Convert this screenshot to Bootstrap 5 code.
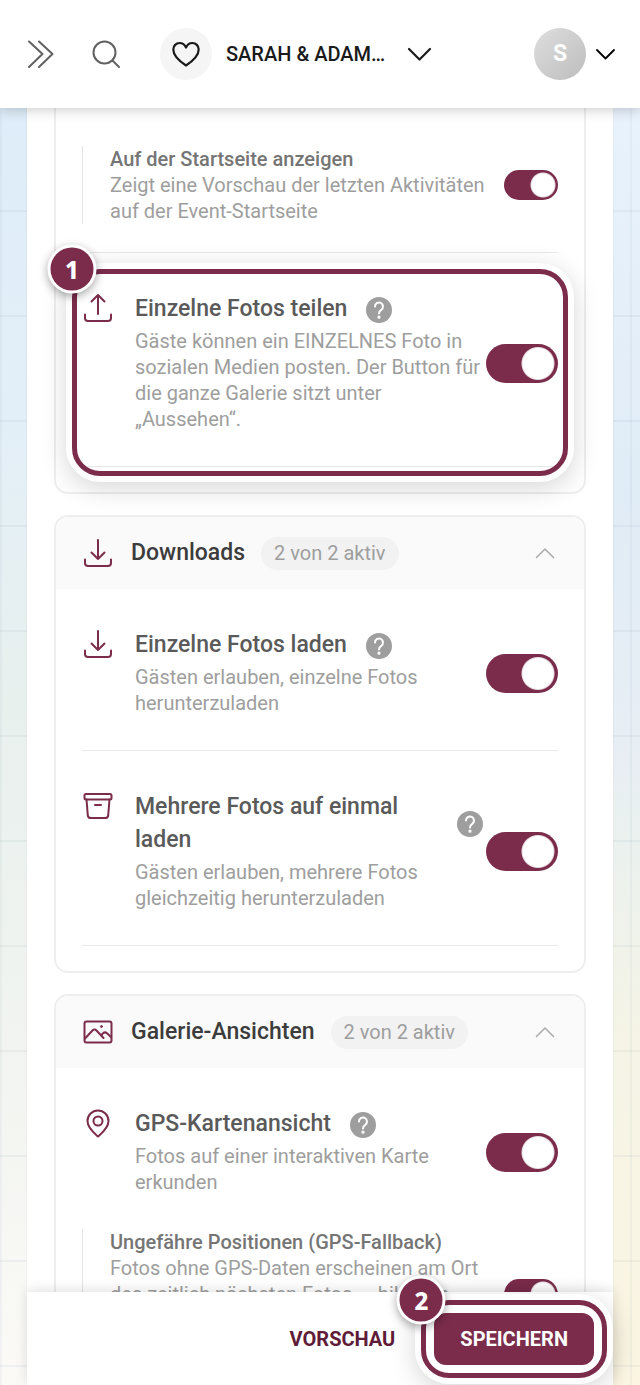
<!DOCTYPE html>
<html lang="de">
<head>
<meta charset="utf-8">
<meta name="viewport" content="width=device-width, initial-scale=1">
<title>Event-Einstellungen</title>
<link href="https://cdn.jsdelivr.net/npm/bootstrap@5.3.0/dist/css/bootstrap.min.css" rel="stylesheet">
<style>
  :root { --wine: #7b2c4b; --line: #eeeeee; }
  body {
    font-family: Roboto, "Liberation Sans", sans-serif;
    font-size: 20px; line-height: 26px; color: #9e9e9e;
    background:
      linear-gradient(rgba(90,120,140,.07) 2px, transparent 2px) 0 0 / 105px 105px,
      linear-gradient(90deg, rgba(90,120,140,.06) 2px, transparent 2px) 0 0 / 105px 105px,
      linear-gradient(#dcecf9, #e3eff8 30%, #e8f0ee 50%, #f1f4f0 75%, #fbfaf7) left / 50% 100% no-repeat,
      linear-gradient(#ebf4fe, #e0ecf6 35%, #e8eef4 55%, #eaf1ef 60%, #f5f4e6 75%, #fbf5e2) right / 50% 100% no-repeat;
  }
  svg { display: block; flex: none; fill: none; stroke: currentColor; stroke-linecap: round; stroke-linejoin: round; }
  .topbar { height: 108px; padding: 0 24px; z-index: 20; box-shadow: 0 2px 12px rgba(0,0,0,.2); color: #1a1a1a; }
  .icon-btn { padding: 0; border: 0; background: none; color: #616161; }
  .event-btn { font-size: 20px; font-weight: 500; gap: 14px; margin-left: 40px; color: #1a1a1a; }
  .disc { width: 52px; height: 52px; border-radius: 50%; background: #f5f5f5; }
  .avatar { background: linear-gradient(135deg, #dedede, #bdbdbd); color: #fff; font-size: 23px; font-weight: 700; }
  .panel { margin: 0 27px; padding: 0 27px; z-index: 0; box-shadow: 0 0 2px rgba(0,0,0,.08); }
  .box { border: 2px solid var(--line); border-radius: 14px; margin-bottom: 21px; }
  .box-first { border-top: 0; border-radius: 0 0 14px 14px; padding-top: 38px; }
  .box-head { height: 72px; padding: 0 26px; background: #fafafa; border-radius: 12px 12px 0 0; color: #3c3c3c; }
  .box-head h2 { font-size: 23px; line-height: 33px; font-weight: 500; margin: 0 16px 2px 17px; }
  .count { padding: 3px 13px 4px; border-radius: 17px; background: #f2f2f2; color: #9e9e9e; }
  .box-body { padding: 0 26px 25px; }
  .setting { margin-top: 26px; padding: 13px 0 34px; border-bottom: 1px solid #e9e9e9; }
  .setting.open { border-bottom: 0; }
  .setting-text { margin: 0 3px 0 21px; min-width: 0; }
  .setting-title { gap: 19px; margin-bottom: 3px; }
  .setting-title label { font-size: 23px; line-height: 33px; font-weight: 500; color: #5a5a5a; }
  .wine { color: var(--wine); }
  .help { width: 26px; height: 26px; border-radius: 50%; background: #9e9e9e; color: #fff; margin-top: 2px; }
  .sub { border-left: 1px solid #e4e4e4; padding-left: 27px; gap: 16px; }
  .sub label { font-weight: 500; color: #757575; }
  .rule { height: 1px; margin: 28px 0 0; background: #e9e9e9; }
  .form-check-input.toggle[type=checkbox] {
    width: 72px; height: 39px; margin: 2px 0 0; border: 0; border-radius: 20px;
    background: radial-gradient(circle at calc(100% - 20px) 50%, #fff 15px, #e4d9de 16px, var(--wine) 17px) center / 100% 100%;
  }
  .form-check-input.toggle-sm[type=checkbox] {
    width: 54px; height: 30px; margin: 0;
    background-image: radial-gradient(circle at calc(100% - 15px) 50%, #fff 11px, #e4d9de 12px, var(--wine) 13px);
  }
  .marker { position: absolute; pointer-events: none; border: 5px solid var(--wine); border-radius: 28px;
    box-shadow: 0 0 0 6px rgba(255,255,255,.92), 0 6px 26px 6px rgba(0,0,0,.16); }
  .marker-item { inset: -10px; }
  .marker-btn { inset: -13px; }
  .step { position: absolute; top: -5px; left: -5px; width: 49px; height: 49px; border: 3px solid #fff; border-radius: 50%;
    background: var(--wine); color: #fff; font: 800 24px/43px "Noto Sans", sans-serif; text-align: center;
    box-shadow: 0 3px 10px rgba(0,0,0,.35); transform: translate(-50%, -50%); }
  .actions { margin: 0 27px; height: 93px; padding: 0 19px; gap: 39px; z-index: 20; box-shadow: 0 -2px 12px rgba(0,0,0,.12); }
  .actions .btn { font-size: 20px; line-height: 26px; font-weight: 700; border: 0; }
  .btn-preview { padding: 13px 0; color: #5f1c38; }
  .btn-store, .btn-store:hover { padding: 13px 26px; border-radius: 12px; background: var(--wine); color: #fff; }
</style>
</head>
<body class="vh-100 d-flex flex-column overflow-hidden">

<svg width="0" height="0" class="position-absolute" aria-hidden="true">
  <symbol id="i-download" viewBox="0 0 32 32"><path d="M16 3v19M9.500 15.500l6.500 6.500 6.500-6.500M3 22.500v3.500a3 3 0 0 0 3 3h20a3 3 0 0 0 3-3v-3.500"/></symbol>
  <symbol id="i-upload" viewBox="0 0 32 32"><path d="M16 22V3M9.500 9.500 16 3l6.500 6.500M3 22.500v3.500a3 3 0 0 0 3 3h20a3 3 0 0 0 3-3v-3.500"/></symbol>
  <symbol id="i-archive" viewBox="0 0 32 32"><rect x="2.500" y="4" width="27" height="5.500" rx="1.500"/><path d="M4.500 9.500l1.300 15.800a3 3 0 0 0 3 2.700h14.400a3 3 0 0 0 3-2.700L27.500 9.500M13 15h6"/></symbol>
  <symbol id="i-image" viewBox="0 0 32 32"><rect x="2.500" y="5.500" width="27" height="21" rx="2"/><path d="M3 22.500l7.500-8q2-2 4 0l7 7.500M19 19.500l2-2.200q2-1.800 4 0L29 21"/><circle cx="19.500" cy="10.500" r="1" fill="currentColor" stroke-width="1"/></symbol>
  <symbol id="i-pin" viewBox="0 0 32 32"><path d="M16 29.500c-4-3.500-10.500-8.500-10.500-15.500a10.500 10.500 0 0 1 21 0c0 7-6.500 12-10.500 15.500z"/><circle cx="16" cy="14" r="4.500"/></symbol>
  <symbol id="i-help" viewBox="0 0 26 26"><path d="M9 9.600a4 4 0 1 1 6.300 3.200c-1.500 1-2.300 1.700-2.300 3.600"/><circle cx="13" cy="20.200" r=".6" fill="currentColor"/></symbol>
  <symbol id="i-up" viewBox="0 0 26 26"><path d="M4.500 17.500 13 9l8.500 8.500"/></symbol>
</svg>

<header class="topbar bg-white d-flex align-items-center position-relative flex-shrink-0">
  <button class="icon-btn" aria-label="Menü öffnen"><svg width="32" height="32" viewBox="0 0 32 32" stroke-width="2"><path d="M5 3.500 18.500 16 5 29M15 3.500 28.500 16 15 29"/></svg></button>
  <button class="icon-btn ms-4 ps-2" aria-label="Suchen"><svg width="32" height="32" viewBox="0 0 32 32" stroke-width="2"><circle cx="16.500" cy="14.500" r="11"/><path d="M24.500 22.500 31 29"/></svg></button>
  <button class="icon-btn event-btn d-flex align-items-center">
    <span class="disc d-flex align-items-center justify-content-center"><svg width="30" height="30" viewBox="0 0 30 30" stroke-width="2.200"><path d="M15 26.500C9 22.500 2.300 17.500 2.300 10.500c0-3.700 2.800-6.500 6.200-6.500 3 0 5.300 1.600 6.500 4.500C16.200 5.600 18.500 4 21.500 4c3.400 0 6.200 2.800 6.200 6.500 0 7-6.700 12-12.700 16z"/></svg></span>
    <span>SARAH &amp; ADAM…</span>
    <svg class="ms-2" width="26" height="26" viewBox="0 0 26 26" stroke-width="2.200"><path d="M2 8 12.500 18.500 23 8"/></svg>
  </button>
  <button class="icon-btn ms-auto d-flex align-items-center gap-2 text-black" aria-label="Konto">
    <span class="disc avatar d-flex align-items-center justify-content-center">S</span>
    <svg width="22" height="22" viewBox="0 0 22 22" stroke-width="1.800"><path d="M3 7l8.500 8.500L20 7"/></svg>
  </button>
</header>

<main class="flex-fill overflow-hidden" style="min-height:0">
  <div class="panel bg-white position-relative">

    <section class="box box-first">
      <div class="box-body">
        <div class="sub d-flex align-items-center">
          <div class="flex-fill"><label class="d-block" for="t-home">Auf der Startseite anzeigen</label>Zeigt eine Vorschau der letzten Aktivitäten auf der Event-Startseite</div>
          <input class="form-check-input toggle toggle-sm flex-shrink-0" type="checkbox" role="switch" id="t-home" checked>
        </div>
        <div class="rule"></div>
        <div class="setting d-flex position-relative">
          <svg class="wine" width="32" height="32" stroke-width="2"><use href="#i-upload"/></svg>
          <div class="setting-text flex-fill">
            <div class="setting-title d-flex align-items-center"><label for="t-share">Einzelne Fotos teilen</label><button class="icon-btn help flex-shrink-0" aria-label="Hilfe"><svg width="26" height="26" stroke-width="2"><use href="#i-help"/></svg></button></div>
            Gäste können ein EINZELNES Foto in sozialen Medien posten. Der Button für die ganze Galerie sitzt unter „Aussehen“.
          </div>
          <input class="form-check-input toggle flex-shrink-0 align-self-center" type="checkbox" role="switch" id="t-share" checked>
          <div class="marker marker-item"><span class="step">1</span></div>
        </div>
      </div>
    </section>

    <section class="box">
      <div class="box-head d-flex align-items-center">
        <svg class="wine" width="32" height="32" stroke-width="2"><use href="#i-download"/></svg>
        <h2>Downloads</h2><span class="count">2 von 2 aktiv</span>
        <button class="icon-btn ms-auto" style="color:#aaa" aria-label="Downloads einklappen"><svg width="26" height="26" stroke-width="1.500"><use href="#i-up"/></svg></button>
      </div>
      <div class="box-body d-flex flex-column">
        <div class="setting d-flex">
          <svg class="wine" width="32" height="32" stroke-width="2"><use href="#i-download"/></svg>
          <div class="setting-text flex-fill">
            <div class="setting-title d-flex align-items-center"><label for="t-one">Einzelne Fotos laden</label><button class="icon-btn help flex-shrink-0" aria-label="Hilfe"><svg width="26" height="26" stroke-width="2"><use href="#i-help"/></svg></button></div>
            Gästen erlauben, einzelne Fotos herunterzuladen
          </div>
          <input class="form-check-input toggle flex-shrink-0 align-self-center" type="checkbox" role="switch" id="t-one" checked>
        </div>
        <div class="setting d-flex">
          <svg class="wine" width="32" height="32" stroke-width="2"><use href="#i-archive"/></svg>
          <div class="setting-text flex-fill">
            <div class="setting-title d-flex align-items-center"><label for="t-many">Mehrere Fotos auf einmal laden</label><button class="icon-btn help flex-shrink-0" aria-label="Hilfe"><svg width="26" height="26" stroke-width="2"><use href="#i-help"/></svg></button></div>
            Gästen erlauben, mehrere Fotos gleichzeitig herunterzuladen
          </div>
          <input class="form-check-input toggle flex-shrink-0 align-self-center" type="checkbox" role="switch" id="t-many" checked>
        </div>
      </div>
    </section>

    <section class="box">
      <div class="box-head d-flex align-items-center">
        <svg class="wine" width="32" height="32" stroke-width="2"><use href="#i-image"/></svg>
        <h2>Galerie-Ansichten</h2><span class="count">2 von 2 aktiv</span>
        <button class="icon-btn ms-auto" style="color:#aaa" aria-label="Galerie-Ansichten einklappen"><svg width="26" height="26" stroke-width="1.500"><use href="#i-up"/></svg></button>
      </div>
      <div class="box-body d-flex flex-column">
        <div class="setting open d-flex">
          <svg class="wine" width="32" height="32" stroke-width="2"><use href="#i-pin"/></svg>
          <div class="setting-text flex-fill">
            <div class="setting-title d-flex align-items-center"><label for="t-gps">GPS-Kartenansicht</label><button class="icon-btn help flex-shrink-0" aria-label="Hilfe"><svg width="26" height="26" stroke-width="2"><use href="#i-help"/></svg></button></div>
            Fotos auf einer interaktiven Karte erkunden
          </div>
          <input class="form-check-input toggle flex-shrink-0 align-self-center" type="checkbox" role="switch" id="t-gps" checked>
        </div>
        <div class="sub d-flex align-items-center">
          <div class="flex-fill"><label class="d-block" for="t-pos">Ungefähre Positionen (GPS-Fallback)</label>Fotos ohne GPS-Daten erscheinen am Ort des zeitlich nächsten Fotos — hilfreich, wenn die Kamera keine Standortdaten gespeichert hat und Bilder fehlen</div>
          <input class="form-check-input toggle toggle-sm flex-shrink-0" type="checkbox" role="switch" id="t-pos" checked>
        </div>
      </div>
    </section>
  </div>
</main>

<footer class="actions bg-white d-flex align-items-center justify-content-end position-relative flex-shrink-0">
  <button class="btn btn-preview">VORSCHAU</button>
  <div class="position-relative">
    <div class="marker marker-btn"><span class="step">2</span></div>
    <button class="btn btn-store">SPEICHERN</button>
  </div>
</footer>

<script src="https://cdn.jsdelivr.net/npm/bootstrap@5.3.0/dist/js/bootstrap.bundle.min.js"></script>
</body>
</html>
